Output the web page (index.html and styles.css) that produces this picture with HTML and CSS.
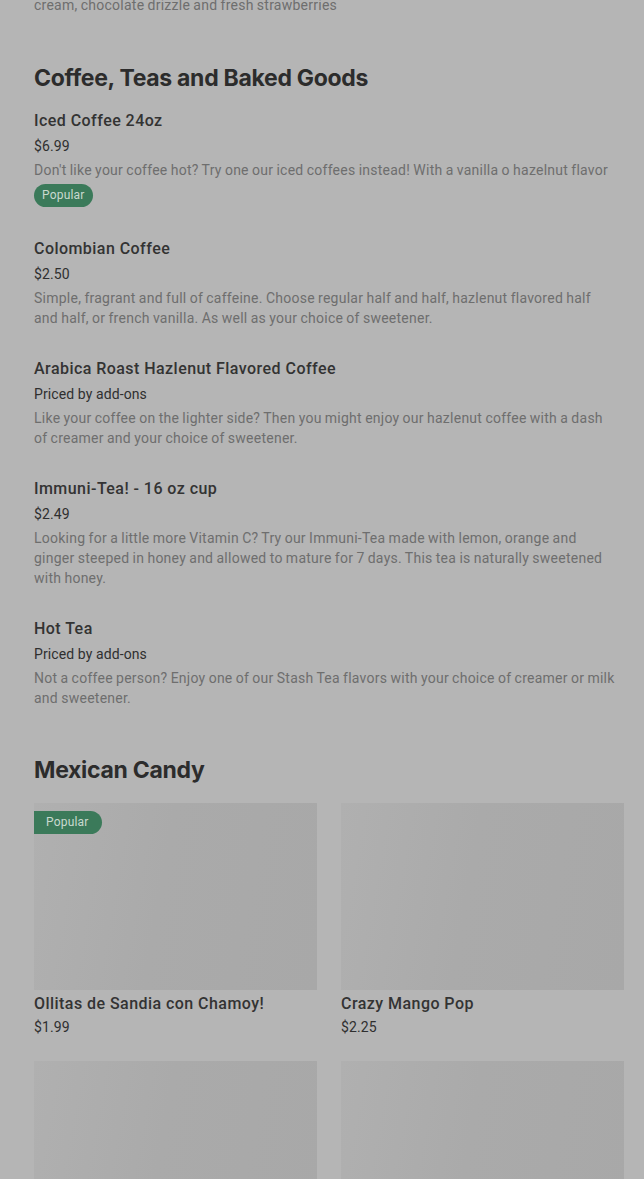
FILE: index.html
```html
<!DOCTYPE html>
<html lang="en">
<head>
<meta charset="utf-8">
<link rel="stylesheet" href="styles.css">
</head>
<body>
<main class="menu">
  <p class="desc tail">cream, chocolate drizzle and fresh strawberries</p>

  <section class="section">
    <h2 class="section-title">Coffee, Teas and Baked Goods</h2>
    <ul class="list">
      <li class="item">
        <h3 class="name">Iced Coffee 24oz</h3>
        <p class="price">$6.99</p>
        <p class="desc">Don't like your coffee hot? Try one our iced coffees instead! With a vanilla o hazelnut flavor</p>
        <span class="badge">Popular</span>
      </li>
      <li class="item">
        <h3 class="name">Colombian Coffee</h3>
        <p class="price">$2.50</p>
        <p class="desc">Simple, fragrant and full of caffeine. Choose regular half and half, hazlenut flavored half and half, or french vanilla. As well as your choice of sweetener.</p>
      </li>
      <li class="item">
        <h3 class="name">Arabica Roast Hazlenut Flavored Coffee</h3>
        <p class="price">Priced by add-ons</p>
        <p class="desc">Like your coffee on the lighter side? Then you might enjoy our hazlenut coffee with a dash of creamer and your choice of sweetener.</p>
      </li>
      <li class="item">
        <h3 class="name">Immuni-Tea! - 16 oz cup</h3>
        <p class="price">$2.49</p>
        <p class="desc">Looking for a little more Vitamin C? Try our Immuni-Tea made with lemon, orange and ginger steeped in honey and allowed to mature for 7 days. This tea is naturally sweetened with honey.</p>
      </li>
      <li class="item">
        <h3 class="name">Hot Tea</h3>
        <p class="price">Priced by add-ons</p>
        <p class="desc">Not a coffee person? Enjoy one of our Stash Tea flavors with your choice of creamer or milk and sweetener.</p>
      </li>
    </ul>
  </section>

  <section class="section section-grid">
    <h2 class="section-title">Mexican Candy</h2>
    <div class="grid">
      <div class="card">
        <div class="thumb"><span class="badge badge-corner">Popular</span></div>
        <h3 class="name">Ollitas de Sandia con Chamoy!</h3>
        <p class="price card-price">$1.99</p>
      </div>
      <div class="card">
        <div class="thumb"></div>
        <h3 class="name">Crazy Mango Pop</h3>
        <p class="price card-price">$2.25</p>
      </div>
      <div class="card">
        <div class="thumb"></div>
      </div>
      <div class="card">
        <div class="thumb"></div>
      </div>
    </div>
  </section>
</main>
</body>
</html>
```

FILE: styles.css
```css
* { box-sizing: border-box; }
html, body {
  margin: 0;
  padding: 0;
  background: #b5b5b5;
  overflow: hidden;
}
body {
  font-family: Roboto, "Liberation Sans", sans-serif;
  color: #2f2f2f;
}
.menu {
  width: 590px;
  margin-left: 34px;
  margin-top: -5px;
}
p, h2, h3, ul { margin: 0; padding: 0; }
.list { list-style: none; display: flex; flex-direction: column; gap: 31px; }
.item { display: flex; flex-direction: column; align-items: flex-start; }
.section { margin-top: 49px; }
.section-grid { margin-top: 48px; }
.section-title {
  font-family: Inter, "Liberation Sans", sans-serif;
  font-size: 23px;
  line-height: 28px;
  font-weight: 700;
  letter-spacing: -0.3px;
  color: #2c2c2c;
  margin-bottom: 19px;
}
.name {
  font-size: 16px;
  line-height: 20px;
  font-weight: 500;
  letter-spacing: 0.45px;
  color: #333333;
}
.price {
  font-size: 14px;
  line-height: 20px;
  margin-top: 5px;
  color: #2f2f2f;
  letter-spacing: 0.1px;
}
.desc {
  max-width: 583px;
  font-size: 14px;
  line-height: 20px;
  margin-top: 4px;
  letter-spacing: 0.25px;
  word-spacing: -0.5px;
  color: #6e6e6e;
}
.tail { margin-top: 0; }
.badge {
  display: block;
  margin-top: 4px;
  margin-bottom: 1px;
  height: 23px;
  line-height: 23px;
  padding: 0 8px;
  border-radius: 12px;
  background: #3b7a5a;
  color: #c9d9cf;
  font-size: 12px;
  letter-spacing: 0.2px;
}
.grid {
  display: grid;
  grid-template-columns: 283px 283px;
  column-gap: 24px;
  row-gap: 24px;
}
.thumb {
  position: relative;
  height: 187px;
  background: linear-gradient(100deg, #b0b0b0 0%, #aaaaaa 45%, #a8a8a8 100%);
  margin-bottom: 4px;
}
.badge-corner {
  position: absolute;
  left: 0;
  top: 8px;
  margin: 0;
  padding: 0 13px 0 12px;
  border-radius: 0 12px 12px 0;
}
.card-price { margin-top: 3px; }
```
